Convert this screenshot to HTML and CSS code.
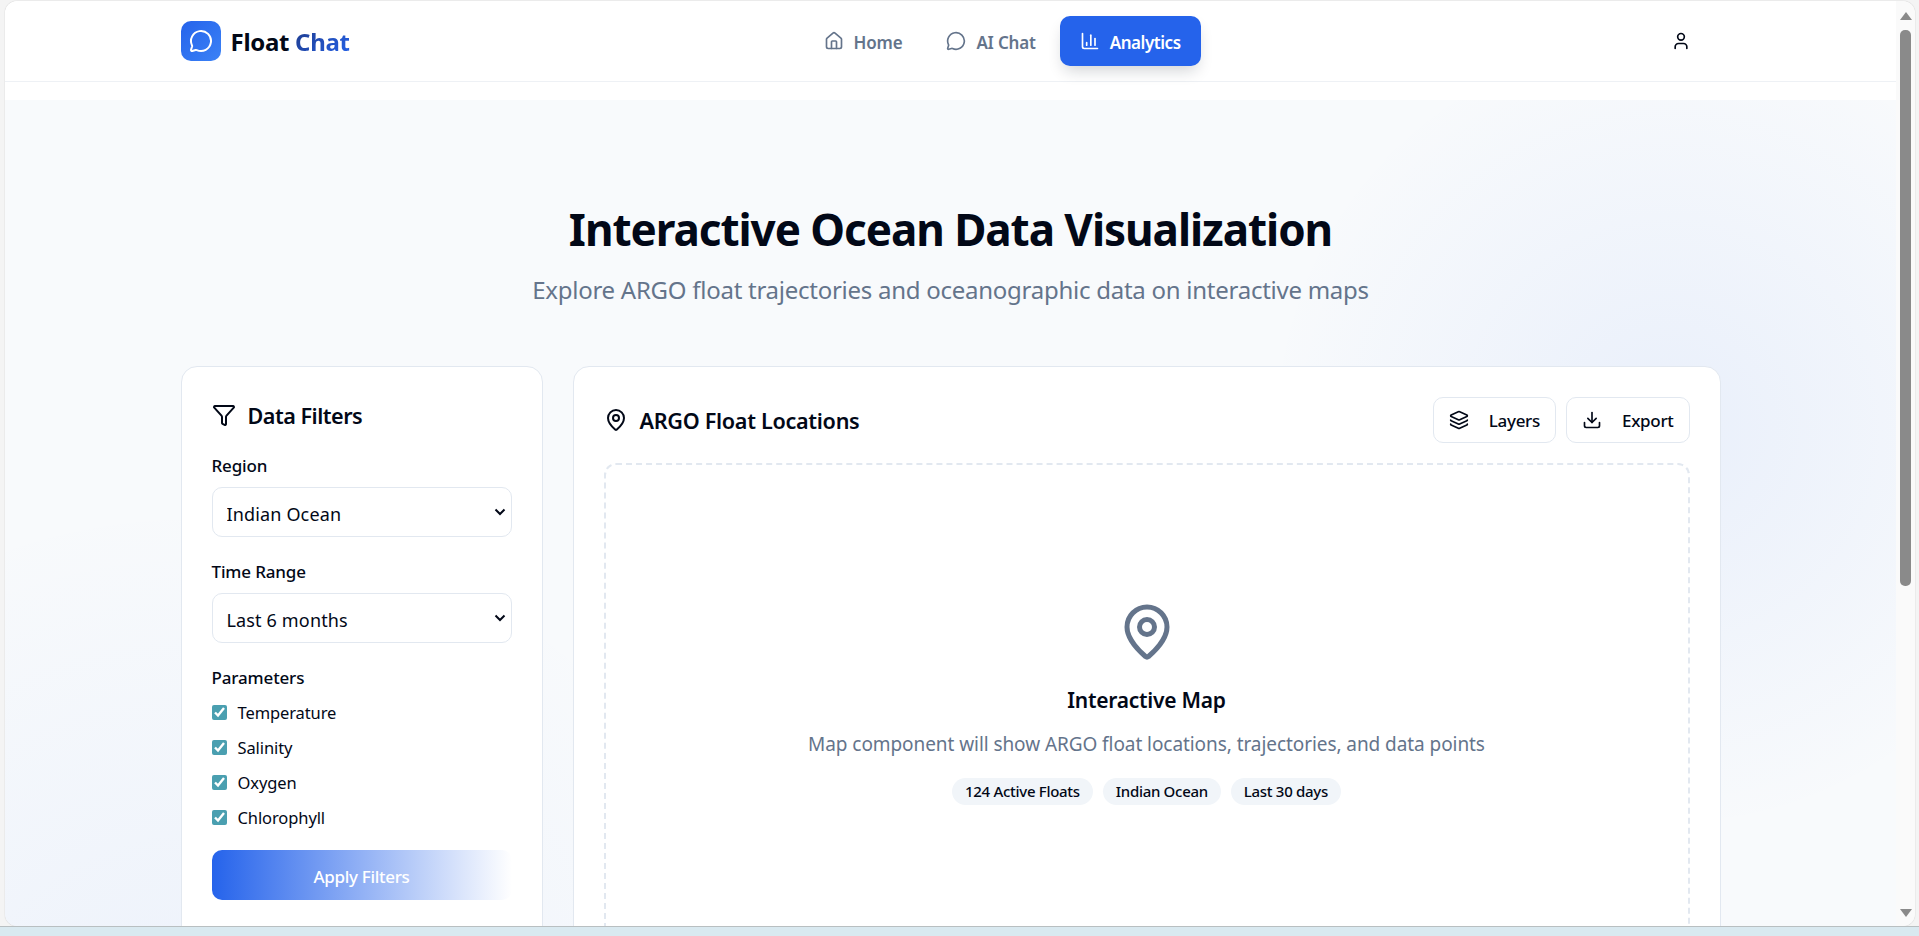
FILE: index.html
```html
<!DOCTYPE html>
<html lang="en">
<head>
  <meta charset="UTF-8">
  <meta name="viewport" content="width=device-width, initial-scale=1.0">
  <title>Float Chat</title>
  <link rel="stylesheet" href="styles.css">
</head>
<body>

  <div class="window">
    <div class="page">

      <header class="topbar">
        <div class="topbar-inner">
          <a class="logo" href="#">
            <span class="logo-mark">
              <svg class="icon" width="24" height="24" viewBox="0 0 24 24"><path d="M2.992 16.342a2 2 0 0 1 .094 1.167l-1.065 3.29a1 1 0 0 0 1.236 1.168l3.413-.998a2 2 0 0 1 1.099.092 10 10 0 1 0-4.777-4.719"/></svg>
            </span>
            <span class="logo-text">Float <span class="logo-accent">Chat</span></span>
          </a>
          <nav class="nav">
            <a class="nav-link" href="#">
              <svg class="icon" width="20" height="20" viewBox="0 0 24 24"><path d="M15 21v-8a1 1 0 0 0-1-1h-4a1 1 0 0 0-1 1v8"/><path d="M3 10a2 2 0 0 1 .709-1.528l7-5.999a2 2 0 0 1 2.582 0l7 5.999A2 2 0 0 1 21 10v9a2 2 0 0 1-2 2H5a2 2 0 0 1-2-2z"/></svg>
              <span class="nav-text">Home</span>
            </a>
            <a class="nav-link" href="#">
              <svg class="icon" width="20" height="20" viewBox="0 0 24 24"><path d="M2.992 16.342a2 2 0 0 1 .094 1.167l-1.065 3.29a1 1 0 0 0 1.236 1.168l3.413-.998a2 2 0 0 1 1.099.092 10 10 0 1 0-4.777-4.719"/></svg>
              <span class="nav-text">AI Chat</span>
            </a>
            <a class="nav-link active" href="#">
              <svg class="icon" width="20" height="20" viewBox="0 0 24 24"><path d="M3 3v16a2 2 0 0 0 2 2h16"/><path d="M18 17V9"/><path d="M13 17V5"/><path d="M8 17v-3"/></svg>
              <span class="nav-text">Analytics</span>
            </a>
          </nav>
          <button class="user-button">
            <svg class="icon" width="20" height="20" viewBox="0 0 24 24"><path d="M19 21v-2a4 4 0 0 0-4-4H9a4 4 0 0 0-4 4v2"/><circle cx="12" cy="7" r="4"/></svg>
          </button>
        </div>
      </header>

      <main class="content">
        <section class="hero">
          <h1>Interactive Ocean Data Visualization</h1>
          <p>Explore ARGO float trajectories and oceanographic data on interactive maps</p>
        </section>

        <div class="dashboard">
          <aside class="card filters">
            <h2 class="card-title">
              <svg class="icon" width="24" height="24" viewBox="0 0 24 24"><path d="M10 20a1 1 0 0 0 .553.895l2 1A1 1 0 0 0 14 21v-7a2 2 0 0 1 .517-1.341L21.74 4.67A1 1 0 0 0 21 3H3a1 1 0 0 0-.742 1.67l7.225 7.989A2 2 0 0 1 10 14z"/></svg>
              <span class="title-text">Data Filters</span>
            </h2>

            <label class="field-label" for="region">Region</label>
            <select class="field-select" id="region">
              <option>Indian Ocean</option>
              <option>Pacific Ocean</option>
              <option>Atlantic Ocean</option>
            </select>

            <label class="field-label" for="range">Time Range</label>
            <select class="field-select" id="range">
              <option>Last 6 months</option>
              <option>Last 30 days</option>
              <option>Last year</option>
            </select>

            <div class="field-label">Parameters</div>
            <div class="param-list">
              <label class="param"><input type="checkbox" checked> Temperature</label>
              <label class="param"><input type="checkbox" checked> Salinity</label>
              <label class="param"><input type="checkbox" checked> Oxygen</label>
              <label class="param"><input type="checkbox" checked> Chlorophyll</label>
            </div>

            <button class="apply-button">Apply Filters</button>
          </aside>

          <section class="card map-card">
            <div class="map-head">
              <h2 class="card-title">
                <svg class="icon" width="24" height="24" viewBox="0 0 24 24"><path d="M20 10c0 4.993-5.539 10.193-7.399 11.799a1 1 0 0 1-1.202 0C9.539 20.193 4 14.993 4 10a8 8 0 0 1 16 0"/><circle cx="12" cy="10" r="3"/></svg>
                <span class="title-text">ARGO Float Locations</span>
              </h2>
              <div class="map-actions">
                <button class="outline-button">
                  <svg class="icon" width="20" height="20" viewBox="0 0 24 24"><path d="M12.83 2.18a2 2 0 0 0-1.66 0L2.6 6.08a1 1 0 0 0 0 1.83l8.58 3.91a2 2 0 0 0 1.66 0l8.58-3.9a1 1 0 0 0 0-1.83z"/><path d="M2 12a1 1 0 0 0 .58.91l8.6 3.91a2 2 0 0 0 1.65 0l8.58-3.9A1 1 0 0 0 22 12"/><path d="M2 17a1 1 0 0 0 .58.91l8.6 3.91a2 2 0 0 0 1.65 0l8.58-3.9A1 1 0 0 0 22 17"/></svg>
                  Layers
                </button>
                <button class="outline-button">
                  <svg class="icon" width="20" height="20" viewBox="0 0 24 24"><path d="M12 15V3"/><path d="M21 15v4a2 2 0 0 1-2 2H5a2 2 0 0 1-2-2v-4"/><path d="m7 10 5 5 5-5"/></svg>
                  Export
                </button>
              </div>
            </div>

            <div class="map-box">
              <svg class="icon map-pin" width="60" height="60" viewBox="0 0 24 24"><path d="M20 10c0 4.993-5.539 10.193-7.399 11.799a1 1 0 0 1-1.202 0C9.539 20.193 4 14.993 4 10a8 8 0 0 1 16 0"/><circle cx="12" cy="10" r="3"/></svg>
              <h3>Interactive Map</h3>
              <p>Map component will show ARGO float locations, trajectories, and data points</p>
              <div class="chips">
                <span class="chip">124 Active Floats</span>
                <span class="chip">Indian Ocean</span>
                <span class="chip">Last 30 days</span>
              </div>
            </div>
          </section>
        </div>
      </main>

    </div>

    <!-- Scrollbar -->
    <div class="scrollbar">
      <span class="arrow-up"></span>
      <span class="thumb"></span>
      <span class="arrow-down"></span>
    </div>
  </div>

  <div class="desktop"></div>

</body>
</html>
```

FILE: styles.css
```css
* {
  box-sizing: border-box;
}

html,
body {
  height: 100%;
}

body {
  margin: 0;
  display: flex;
  flex-direction: column;
  overflow: hidden;
  background-color: #f4f4f4;
  color: #020817;
  font-family: 'Noto Sans', 'Open Sans', sans-serif;
}

a {
  color: inherit;
  text-decoration: none;
}

button {
  font-family: inherit;
  cursor: pointer;
}

.icon {
  flex: none;
  fill: none;
  stroke: currentColor;
  stroke-width: 2;
  stroke-linecap: round;
  stroke-linejoin: round;
}

/* Browser window */
.window {
  flex: 1;
  min-height: 0;
  display: flex;
  margin: 1px 4px 0 5px;
  overflow: hidden;
  background-color: #fff;
  border-radius: 12px;
  box-shadow: 0 0 1px rgba(0, 0, 0, 0.35);
}

.page {
  flex: 1;
  min-width: 0;
  overflow: hidden;
}

.desktop {
  flex: none;
  height: 10px;
  border-top: 1px solid #b9bfc1;
  background-color: #d9e9f0;
}

.scrollbar {
  flex: none;
  width: 19px;
  display: flex;
  flex-direction: column;
  align-items: center;
  padding: 11px 0 9px;
  background-color: #fafafa;
}

.arrow-up {
  border: 6px solid transparent;
  border-top: 0;
  border-bottom: 8px solid #8a8a8a;
}

.arrow-down {
  margin-top: auto;
  border: 6px solid transparent;
  border-bottom: 0;
  border-top: 8px solid #8a8a8a;
}

.thumb {
  flex: none;
  width: 11px;
  height: 556px;
  margin-top: 10px;
  background-color: #8a8a8a;
  border-radius: 5px;
}

/* Top bar */
.topbar {
  height: 81px;
  border-bottom: 1px solid #eef1f5;
  background-color: #fff;
}

.topbar-inner {
  max-width: 1540px;
  height: 100%;
  margin: 0 auto;
  display: flex;
  align-items: center;
  justify-content: space-between;
}

.logo {
  display: flex;
  align-items: center;
  gap: 10px;
}

.logo-mark {
  width: 40px;
  height: 40px;
  display: flex;
  align-items: center;
  justify-content: center;
  color: #fff;
  background: linear-gradient(135deg, #2563eb, #3b82f6);
  border-radius: 10px;
}

.logo-text {
  padding-top: 1px;
  font-size: 24px;
  font-weight: 700;
  letter-spacing: -0.3px;
}

.logo-accent {
  background: linear-gradient(135deg, #1e3a8a, #2563eb);
  -webkit-background-clip: text;
  background-clip: text;
  color: transparent;
}

.nav {
  display: flex;
  gap: 4px;
  margin-left: 14px;
}

.nav-link {
  height: 50px;
  display: flex;
  align-items: center;
  gap: 10px;
  padding: 0 20px;
  color: #64748b;
  font-size: 17px;
  font-weight: 500;
  letter-spacing: -0.2px;
  border-radius: 10px;
}

.nav-link.active {
  color: #fff;
  background-color: #2563eb;
  box-shadow: 0 8px 16px -4px rgba(15, 23, 42, 0.2);
  letter-spacing: -0.45px;
}

.nav-text {
  padding-top: 2px;
  font-weight: 600;
}

.user-button {
  width: 80px;
  height: 40px;
  display: flex;
  align-items: center;
  justify-content: center;
  padding: 0;
  color: #020817;
  background: none;
  border: none;
}

/* Page background */
.content {
  height: 1100px;
  margin-top: 18px;
  padding-top: 99px;
  background-color: #f8fafc;
  background-image:
    radial-gradient(circle at 88% 30%, rgba(37, 99, 235, 0.07), transparent 22%),
    radial-gradient(circle at 10% 90%, rgba(37, 99, 235, 0.06), transparent 30%);
}

/* Hero */
.hero {
  text-align: center;
}

.hero h1 {
  margin: 0;
  font-size: 44px;
  line-height: 60px;
  font-weight: 700;
  letter-spacing: -1.05px;
}

.hero p {
  margin: 13px 0 0;
  color: #64748b;
  font-size: 24px;
  line-height: 36px;
  letter-spacing: -0.26px;
}

/* Cards */
.dashboard {
  max-width: 1540px;
  margin: 58px auto 0;
  display: grid;
  grid-template-columns: 362px 1fr;
  gap: 30px;
  align-items: start;
}

.card {
  padding: 30px;
  background-color: #fff;
  border: 1px solid #e2e8f0;
  border-radius: 16px;
}

.card-title {
  margin: 0;
  display: flex;
  align-items: center;
  gap: 12px;
  font-size: 21.6px;
  line-height: 34px;
  font-weight: 600;
  letter-spacing: -0.3px;
}

.title-text {
  padding-top: 2px;
}

/* Filters */
.filters {
  padding-bottom: 60px;
}

.filters .card-title {
  margin-bottom: 22px;
}

.filters .title-text {
  letter-spacing: -0.5px;
}

.field-label {
  display: block;
  font-size: 17px;
  line-height: 22px;
  font-weight: 500;
  letter-spacing: -0.15px;
}

.field-select {
  display: block;
  width: 100%;
  height: 50px;
  margin: 10px 0 24px;
  padding: 3px 14px 0;
  color: #020817;
  background: #fff url("data:image/svg+xml,%3Csvg xmlns='http://www.w3.org/2000/svg' width='12' height='8' viewBox='0 0 12 8'%3E%3Cpath d='M1.5 1.5 6 6l4.5-4.5' fill='none' stroke='%23020817' stroke-width='2'/%3E%3C/svg%3E") no-repeat right 5px center;
  border: 1px solid #e2e8f0;
  border-radius: 10px;
  appearance: none;
  font-family: inherit;
  font-size: 18px;
  letter-spacing: 0.15px;
}

.param-list {
  display: flex;
  flex-direction: column;
  gap: 12px;
  margin-top: 12px;
}

.param {
  display: flex;
  align-items: center;
  gap: 11px;
  font-size: 16.5px;
  line-height: 23px;
  letter-spacing: -0.1px;
}

.param input {
  width: 15px;
  height: 15px;
  margin: 0;
  accent-color: #4a9fb0;
}

.apply-button {
  display: block;
  width: 100%;
  height: 50px;
  margin-top: 21px;
  padding: 2px 0 0;
  color: #fff;
  background: linear-gradient(90deg, #2563eb, #fff);
  border: none;
  border-radius: 10px;
  font-size: 17px;
  font-weight: 500;
  letter-spacing: -0.3px;
}

/* Map */
.map-head {
  display: flex;
  align-items: center;
  justify-content: space-between;
  height: 46px;
  margin-bottom: 20px;
}

.map-actions {
  display: flex;
  gap: 10px;
}

.outline-button {
  height: 46px;
  display: flex;
  align-items: center;
  gap: 20px;
  padding: 0 15px;
  color: #020817;
  background-color: #fff;
  border: 1px solid #e2e8f0;
  border-radius: 10px;
  font-size: 17px;
  font-weight: 500;
  letter-spacing: -0.3px;
}

.map-box {
  height: 500px;
  display: flex;
  flex-direction: column;
  align-items: center;
  padding-top: 137px;
  text-align: center;
  border: 2px dashed #e2e8f0;
  border-radius: 12px;
}

.map-pin {
  color: #64748b;
}

.map-box h3 {
  margin: 22px 0 0;
  font-size: 21px;
  line-height: 32px;
  font-weight: 600;
  letter-spacing: -0.25px;
}

.map-box p {
  margin: 14px 0 0;
  color: #64748b;
  font-size: 19px;
  line-height: 28px;
  letter-spacing: -0.07px;
}

.chips {
  display: flex;
  gap: 10px;
  margin-top: 20px;
}

.chip {
  padding: 0 13px;
  font-size: 15px;
  line-height: 27px;
  font-weight: 500;
  letter-spacing: -0.3px;
  background-color: #f1f5f9;
  border-radius: 14px;
}
```
